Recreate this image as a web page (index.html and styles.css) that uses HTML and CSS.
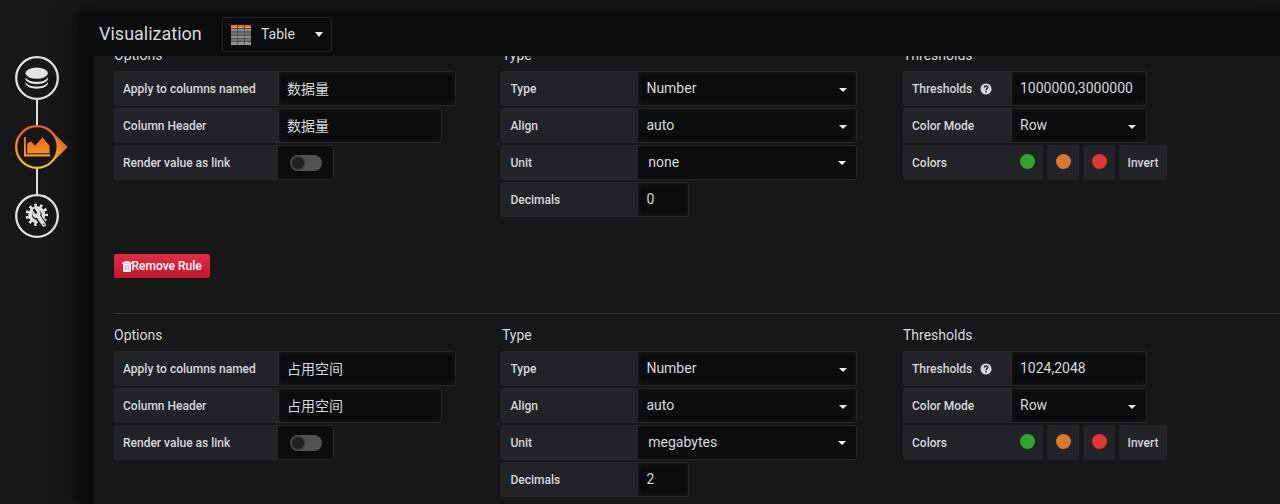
FILE: index.html
```
<!DOCTYPE html>
<html lang="en">
<head>
<meta charset="utf-8">
<title>Visualization</title>
<link rel="stylesheet" href="styles.css">
</head>
<body>
<div class="editor">
  <nav class="sidebar">
    <svg class="tab" viewBox="0 0 54 44">
      <circle cx="22" cy="22" r="20.8" class="ring"/>
      <g fill="#e3e3e3">
        <ellipse cx="21.7" cy="17.2" rx="11.2" ry="5.6"/>
        <path d="M10.5 21.3c1.4 3.2 6.2 4.5 11.2 4.5s9.800-1.300 11.200-4.500v2.300c-1.400 3.200-6.200 4.600-11.200 4.600s-9.800-1.400-11.200-4.600z"/>
        <path d="M10.500 26c1.400 3.200 6.200 4.500 11.200 4.500s9.800-1.300 11.200-4.500v2.100c-1.400 3.200-6.200 4.600-11.200 4.600s-9.800-1.400-11.200-4.600z"/>
      </g>
    </svg>
    <span class="link"></span>
    <svg class="tab" viewBox="0 0 54 44">
      <defs>
        <linearGradient id="flame" gradientUnits="userSpaceOnUse" x1="0" y1="0" x2="0" y2="44">
          <stop offset="0" stop-color="#f05a28"/><stop offset="1" stop-color="#fbca0a"/>
        </linearGradient>
        <linearGradient id="flame-icon" gradientUnits="userSpaceOnUse" x1="0" y1="8" x2="0" y2="38">
          <stop offset="0" stop-color="#f05a28"/><stop offset="1" stop-color="#fbab18"/>
        </linearGradient>
      </defs>
      <path d="M35 4.500L52.700 22 35 39.500A22 22 0 0 0 35 4.500z" fill="url(#flame-icon)"/>
      <circle cx="22" cy="22" r="20.800" fill="#161719" stroke="url(#flame)" stroke-width="2.300"/>
      <path d="M9 12h2v17.300h24.200v2.200H9z" fill="url(#flame-icon)"/>
      <path d="M12.200 28.200V18.500l3.600-2.300 4.100 4.600 7.700-8.600 4.200 5.300 2.700 3.300v7.400z" fill="url(#flame-icon)"/>
    </svg>
    <span class="link"></span>
    <svg class="tab" viewBox="0 0 54 44">
      <circle cx="22" cy="22" r="20.800" class="ring"/>
      <circle cx="21.800" cy="20.800" r="9.600" fill="none" stroke="#e3e3e3" stroke-width="3.200" stroke-dasharray="2.600 2.883" stroke-dashoffset="1.300"/>
      <circle cx="21.800" cy="20.800" r="6.700" fill="none" stroke="#e3e3e3" stroke-width="3.600"/>
      <path d="M23.500 23.500l5.800 8" stroke="#161719" stroke-width="6.400" stroke-linecap="round"/>
      <path d="M22.300 20.800l6.600 9.900" stroke="#e3e3e3" stroke-width="3.900" stroke-linecap="round"/>
      <circle cx="21.400" cy="19.800" r="4.200" fill="#e3e3e3"/>
      <path d="M18.600 15l2.700 4.500" stroke="#161719" stroke-width="2.400"/>
      <circle cx="28.700" cy="30.300" r=".8" fill="#161719"/>
    </svg>
  </nav>
  <main class="pane">
    <header class="toolbar">
      <span class="title">Visualization</span>
      <div class="picker">
        <svg class="table-icon" viewBox="0 0 20 20">
          <path fill="#484848" d="M0 3h20v17H0z"/>
          <path fill="#f05a28" d="M0 0h6.300v2H0zM7 0h6.300v2H7zM14 0h6v2h-6z"/>
          <path fill="#f9a11b" d="M0 1.500h6.300V3H0zM7 1.500h6.300V3H7zM14 1.500h6V3h-6z"/>
          <path fill="#929292" d="M0 4h6.300v2.300H0zM7 4h6.300v2.300H7zM14 4h6v2.300h-6zM0 10.700h6.300V13H0zM7 10.700h6.300V13H7zM14 10.700h6V13h-6zM0 17h6.300v3H0zM7 17h6.300v3H7zM14 17h6v3h-6z"/>
          <path fill="#737373" d="M0 7.200h6.300v2.600H0zM7 7.200h6.300v2.600H7zM14 7.200h6v2.600h-6zM0 13.800h6.300v2.400H0zM7 13.800h6.300v2.400H7zM14 13.800h6v2.400h-6z"/>
        </svg>
        <span class="picker-name">Table</span>
        <i class="caret wide"></i>
      </div>
    </header>
    <div class="content">
      <section class="rule">
        <div class="group options">
          <h5>Options</h5>
          <div class="row"><label>Apply to columns named</label><div class="field cjk w-177">数据量</div></div>
          <div class="row"><label>Column Header</label><div class="field cjk w-163">数据量</div></div>
          <div class="row"><label class="short">Render value as link</label><div class="switch"><span class="track"><i class="knob"></i></span></div></div>
        </div>
        <div class="group type">
          <h5>Type</h5>
          <div class="row"><label>Type</label><div class="field w-219">Number<i class="caret"></i></div></div>
          <div class="row"><label>Align</label><div class="field w-219">auto<i class="caret"></i></div></div>
          <div class="row"><label>Unit</label><div class="field unit w-219">none<i class="caret"></i></div></div>
          <div class="row"><label>Decimals</label><div class="field w-51">0</div></div>
        </div>
        <div class="group thresholds">
          <h5>Thresholds</h5>
          <div class="row"><label>Thresholds<svg class="help" viewBox="0 0 12 12"><circle cx="6" cy="6" r="5.500" fill="#d8d9da"/><path d="M4.200 4.600C4.400 2.400 7.900 2.500 7.700 4.700 7.600 5.700 6.100 5.700 6.100 7" fill="none" stroke="#212124" stroke-width="1.500"/><path d="M5.300 7.800h1.500v1.400H5.300z" fill="#212124"/></svg></label><div class="field w-135">1000000,3000000</div></div>
          <div class="row"><label>Color Mode</label><div class="field w-135">Row<i class="caret"></i></div></div>
          <div class="row"><label>Colors</label><span class="swatch first"><i class="dot green"></i></span><span class="swatch"><i class="dot orange"></i></span><span class="swatch"><i class="dot red"></i></span><span class="invert">Invert</span></div>
        </div>
      </section>
      <button class="remove"><svg class="trash" viewBox="0 0 10 11"><path fill="#fff" d="M3 0h4l.6 1.200H10v1.500H0V1.200h2.400zM1 3h8v7l-1 1H2l-1-1z"/><path d="M3.300 4.200v5M5 4.200v5M6.700 4.200v5" stroke="#e58a94" stroke-width=".8"/></svg>Remove Rule</button>
      <hr>
      <section class="rule">
        <div class="group options">
          <h5>Options</h5>
          <div class="row"><label>Apply to columns named</label><div class="field cjk w-177">占用空间</div></div>
          <div class="row"><label>Column Header</label><div class="field cjk w-163">占用空间</div></div>
          <div class="row"><label class="short">Render value as link</label><div class="switch"><span class="track"><i class="knob"></i></span></div></div>
        </div>
        <div class="group type">
          <h5>Type</h5>
          <div class="row"><label>Type</label><div class="field w-219">Number<i class="caret"></i></div></div>
          <div class="row"><label>Align</label><div class="field w-219">auto<i class="caret"></i></div></div>
          <div class="row"><label>Unit</label><div class="field unit w-219">megabytes<i class="caret"></i></div></div>
          <div class="row"><label>Decimals</label><div class="field w-51">2</div></div>
        </div>
        <div class="group thresholds">
          <h5>Thresholds</h5>
          <div class="row"><label>Thresholds<svg class="help" viewBox="0 0 12 12"><circle cx="6" cy="6" r="5.500" fill="#d8d9da"/><path d="M4.200 4.600C4.400 2.400 7.900 2.500 7.700 4.700 7.600 5.700 6.100 5.700 6.100 7" fill="none" stroke="#212124" stroke-width="1.500"/><path d="M5.300 7.800h1.500v1.400H5.300z" fill="#212124"/></svg></label><div class="field w-135">1024,2048</div></div>
          <div class="row"><label>Color Mode</label><div class="field w-135">Row<i class="caret"></i></div></div>
          <div class="row"><label>Colors</label><span class="swatch first"><i class="dot green"></i></span><span class="swatch"><i class="dot orange"></i></span><span class="swatch"><i class="dot red"></i></span><span class="invert">Invert</span></div>
        </div>
      </section>
    </div>
  </main>
</div>
</body>
</html>
```
FILE: styles.css
```
* { box-sizing: border-box; }
body {
  margin: 0;
  height: 504px;
  overflow: hidden;
  background: #161719;
  color: #d8d9da;
  font: 14px/20px Roboto, "Noto Sans CJK SC", sans-serif;
}
.editor { display: flex; height: 504px; padding-top: 12px; }
.sidebar {
  flex: none;
  width: 79px;
  padding: 44px 0 0 15px;
  display: flex;
  flex-direction: column;
}
.tab { display: block; width: 54px; height: 44px; flex: none; }
.ring { fill: #161719; stroke: #e3e3e3; stroke-width: 2.3; }
.link { width: 2px; height: 25px; margin-left: 21px; background: #e3e3e3; flex: none; }
.pane {
  flex: 1;
  min-width: 0;
  display: flex;
  flex-direction: column;
  background: #0b0c0e;
  box-shadow: 0 0 20px #060607;
}
.toolbar { flex: none; display: flex; height: 44px; padding: 5px 0 0 20px; }
.title { width: 123px; font-size: 18px; line-height: 33px; }
.picker {
  display: flex;
  align-items: center;
  width: 110px;
  height: 35px;
  padding: 0 8px;
  border: 1px solid #262628;
  border-radius: 2px;
}
.table-icon { width: 20px; height: 20px; margin-right: 10px; }
.picker-name { flex: 1; padding-bottom: 2px; }
.content {
  flex: 1;
  min-height: 0;
  margin-left: 15px;
  padding-left: 20px;
  overflow: hidden;
  background: #161719;
}
.rule { display: flex; height: 163px; }
.content > .rule:first-child { margin-top: -11px; height: 172px; }
.group { flex: none; }
.options { width: 387px; }
.type { width: 402px; }
h5 { margin: 0 0 6px; font-size: 14px; font-weight: 400; line-height: 20px; }
.type h5 { padding-left: 1px; }
.row { display: flex; height: 35px; margin-bottom: 2px; }
label {
  display: flex;
  align-items: center;
  padding: 0 8px;
  background: #212327;
  border: 1px solid #242629;
  border-radius: 2px 0 0 2px;
  font-size: 12px;
  font-weight: 500;
}
.options label { width: 165px; }
.options .short { width: 164px; }
.type label { width: 137px; padding-left: 8.4px; }
.thresholds label { width: 109px; }
.help { width: 12px; height: 12px; margin-left: 7.5px; }
.field {
  display: flex;
  justify-content: space-between;
  align-items: center;
  padding: 0 9px 2px 8px;
  background: #0b0c0e;
  border: 1px solid #262628;
  border-left: 0;
  border-radius: 0 3px 3px 0;
  box-shadow: inset 0 0 5px #17181a;
}
.type .field { padding-left: 8.4px; }
.cjk { padding-bottom: 0; }
.type .unit { padding-left: 10.3px; padding-right: 10px; box-shadow: none; }
.w-177 { width: 177px; }
.w-163 { width: 163px; }
.w-219 { width: 219px; }
.w-51 { width: 51px; }
.w-135 { width: 135px; }
.thresholds .caret { margin-right: 1px; }
.caret {
  width: 0;
  margin-top: 5px;
  border: 4px solid transparent;
  border-top-color: #e9edf2;
  border-bottom: 0;
}
.unit .caret { margin-top: 3px; border-top-color: #fff; }
.caret.wide { margin-top: 0; border-width: 5px 4.5px 0; }
.switch {
  display: flex;
  align-items: center;
  justify-content: center;
  width: 56px;
  background: #0b0c0e;
  border: 1px solid #262628;
  border-left: 0;
  border-radius: 0 3px 3px 0;
}
.track { display: flex; align-items: center; width: 32px; height: 16px; padding-left: 2px; border-radius: 8px; background: #525252; overflow: hidden; }
.knob { width: 12px; height: 12px; border-radius: 6px; background: #212124; box-shadow: 0 0 3px #1a1a1a; }
.swatch, .invert {
  display: flex;
  align-items: center;
  justify-content: center;
  width: 32px;
  margin-right: 4px;
  padding-bottom: 2px;
  background: #212327;
  border-radius: 2px 0 0 2px;
}
.swatch.first { width: 31px; }
.dot { width: 15px; height: 15px; border-radius: 50%; }
.green { background: #32a52e; }
.orange { background: #d9792a; }
.red { background: #e23536; }
.invert { width: 48px; padding: 0; margin: 0; font-size: 12px; font-weight: 500; }
.remove {
  display: flex;
  align-items: center;
  width: 96px;
  height: 24px;
  margin: 37px 0 35px;
  padding: 0 7.5px;
  border: 0;
  border-radius: 2px;
  background: linear-gradient(#e02f44, #c4162a);
  color: #fff;
  font: 500 12px/20px Roboto, sans-serif;
  white-space: nowrap;
}
.trash { width: 10px; height: 11px; flex: none; }
hr { height: 1px; margin: 0 0 11px; border: 0; background: #343436; }
```
